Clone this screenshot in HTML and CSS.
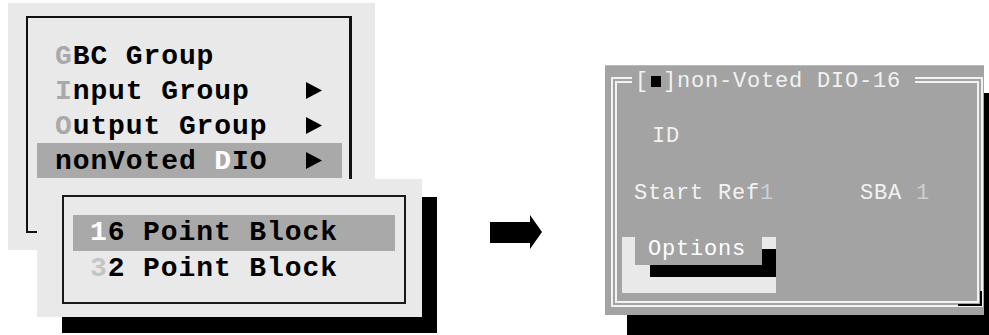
FILE: index.html
```html
<!DOCTYPE html>
<html lang="en">
  <head>
    <meta charset="UTF-8" />
    <title>nonVoted DIO menu</title>
    <link rel="stylesheet" href="styles.css">
  </head>
  <body>
    <div class="stage">
      <div class="menus">
        <div class="menu-box">
          <div class="item"><span><span class="hot">G</span>BC Group</span></div>
          <div class="item">
            <span><span class="hot">I</span>nput Group</span>
            <svg class="sub" width="16" height="17" viewBox="0 0 16 17"><polygon points="0,0 16,8.5 0,17" /></svg>
          </div>
          <div class="item">
            <span><span class="hot">O</span>utput Group</span>
            <svg class="sub" width="16" height="17" viewBox="0 0 16 17"><polygon points="0,0 16,8.5 0,17" /></svg>
          </div>
          <div class="item selected">
            <span>nonVoted <span class="lit">D</span>IO</span>
            <svg class="sub" width="16" height="17" viewBox="0 0 16 17"><polygon points="0,0 16,8.5 0,17" /></svg>
          </div>
        </div>

        <div class="submenu-shadow"></div>
        <div class="submenu">
          <div class="submenu-box">
            <div class="item selected"><span><span class="lit">1</span>6 Point Block</span></div>
            <div class="item"><span><span class="dim">3</span>2 Point Block</span></div>
          </div>
        </div>
      </div>

      <svg class="arrow" width="52" height="34" viewBox="0 0 52 34">
        <polygon points="0,7 40,7 40,0 52,17 40,34 40,28 0,28" />
      </svg>

      <div class="dialog">
        <div class="frame">
          <div class="title">[<span class="box"></span>]non-Voted DIO-16 </div>
          <div class="row id-row">ID</div>
          <div class="row fields">
            <span class="field">Start Ref<span class="value">1</span></span>
            <span>SBA <span class="value">1</span></span>
          </div>
          <div class="options">
            <div class="options-shadow"></div>
            <div class="options-face">Options</div>
          </div>
          <div class="grip"></div>
        </div>
      </div>
    </div>
  </body>
</html>
```

FILE: styles.css
```css
body {
  margin: 0;
  background-color: #fff;
  width: 989px;
  height: 335px;
  overflow: hidden;
  font-family: "Liberation Mono", "DejaVu Sans Mono", monospace;
}

.stage {
  display: flex;
  align-items: flex-start;
}

/* left: pull-down menu with its sub menu */

.menus {
  position: relative;
  width: 367px;
  height: 247px;
  margin: 3px 0 0 8px;
  padding: 13px 0 0 18px;
  box-sizing: border-box;
  background-color: #e9e9e9;
}

.menu-box {
  width: 326px;
  height: 217px;
  box-sizing: border-box;
  border: 2px solid #111;
  border-right-width: 3px;
  padding: 20px 0 0 9px;
}

.item {
  display: flex;
  align-items: center;
  justify-content: space-between;
  width: 305px;
  height: 35px;
  box-sizing: border-box;
  padding: 3px 20px 0 18px;
  line-height: 32px;
  font-size: 28px;
  font-weight: bold;
  letter-spacing: 0.9px;
  color: #000;
  white-space: pre;
}

.item.selected {
  background-color: #a9a9a9;
}

.hot {
  color: #a9a9a9;
}

.lit {
  color: #fff;
}

.dim {
  color: #c4c4c4;
}

.sub {
  fill: #000;
  margin-top: -3px;
}

.submenu-shadow {
  position: absolute;
  left: 54px;
  top: 194px;
  width: 375px;
  height: 136px;
  background-color: #000;
}

.submenu {
  position: absolute;
  left: 29px;
  top: 176px;
  width: 385px;
  height: 138px;
  padding: 16px 0 0 25px;
  box-sizing: border-box;
  background-color: #e9e9e9;
}

.submenu-box {
  width: 344px;
  height: 109px;
  box-sizing: border-box;
  border: 2px solid #1a1a1a;
  padding: 18px 0 0 9px;
}

.submenu-box .item {
  width: 322px;
  height: 36px;
  padding: 0 0 0 17px;
  line-height: 36px;
}

.arrow {
  fill: #000;
  margin: 215px 0 0 115px;
}

/* right: the dialog it opens */

.dialog {
  width: 379px;
  height: 250px;
  margin: 65px 0 0 63px;
  padding: 11px 1px 8px 6px;
  box-sizing: border-box;
  background-color: #a3a3a3;
  border-top: 1px solid #b9b9b9;
  box-shadow: 22px 28px 0 #000;
  color: #f2f2f2;
  font-size: 22px;
  letter-spacing: 0.8px;
}

.frame {
  position: relative;
  height: 100%;
  box-sizing: border-box;
  border: 6px double #f2f2f2;
  padding-top: 41px;
}

.title {
  position: absolute;
  left: 15px;
  top: -14px;
  padding-left: 3px;
  line-height: 26px;
  background-color: #a3a3a3;
  white-space: pre;
}

.box {
  display: inline-block;
  width: 10px;
  height: 11px;
  margin: 0 2px;
  background-color: #000;
}

.row {
  line-height: 26px;
  white-space: pre;
}

.id-row {
  padding-left: 35px;
}

.fields {
  display: flex;
  margin-top: 31px;
  padding-left: 17px;
}

.field {
  width: 226px;
}

.value {
  color: #cfcfcf;
}

.options {
  position: relative;
  width: 154px;
  height: 56px;
  margin: 30px 0 0 5px;
  background-color: #e9e9e9;
}

.options-shadow {
  position: absolute;
  left: 28px;
  top: 12px;
  width: 126px;
  height: 28px;
  background-color: #000;
}

.options-face {
  position: absolute;
  left: 13px;
  top: 0;
  width: 127px;
  height: 28px;
  padding-left: 13px;
  box-sizing: border-box;
  line-height: 25px;
  background-color: #a3a3a3;
  color: #fff;
}

.grip {
  position: absolute;
  right: -5px;
  bottom: -5px;
  width: 22px;
  height: 13px;
  border-right: 2px solid #000;
  border-bottom: 2px solid #000;
}
```
